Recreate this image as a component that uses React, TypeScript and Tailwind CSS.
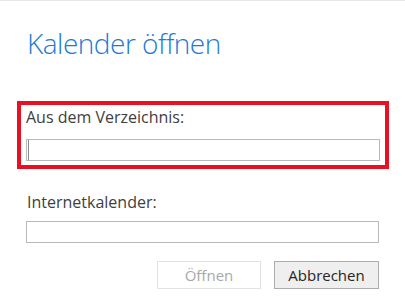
import React from 'react'

function Field({ caret }: { caret?: boolean }) {
  return (
    <div className="flex h-[22px] w-full items-stretch border border-[#b8b8b8] bg-white">
      {caret && <span className="ml-px w-px bg-[#8a8a8a]" />}
      <input readOnly className="min-w-0 flex-1 bg-transparent outline-none" />
    </div>
  )
}

export default function App() {
  return (
    <div className="h-[300px] w-[405px] border-t border-[#e6e6e6] bg-white font-['Open_Sans','Liberation_Sans',sans-serif] text-[#404040]">
      {/* Title */}
      <h1 className="ml-[27px] mt-[22px] text-[28px] font-light leading-[40px] tracking-[-0.5px] text-[#1e7bd4]">
        Kalender öffnen
      </h1>

      {/* Highlighted section */}
      <div className="ml-[17px] mt-[38px] h-[68px] w-[372px] border-4 border-[#e81123] px-[5px] pt-[2px]">
        <label className="block text-[16px] leading-[20px]">Aus dem Verzeichnis:</label>
        <div className="mt-[12px]">
          <Field caret />
        </div>
      </div>

      {/* Internet calendar */}
      <div className="px-[26px]">
        <label className="mt-[23px] block pl-px text-[16px] leading-[20px]">Internetkalender:</label>
        <div className="mt-[9px]">
          <Field />
        </div>

        {/* Buttons */}
        <div className="mt-[18px] flex justify-end gap-[13px]">
          <button disabled className="h-[28px] w-[104px] border border-[#e2e2e2] bg-white text-[15px] text-[#a8a8a8]">
            Öffnen
          </button>
          <button className="h-[28px] w-[105px] border border-[#acacac] bg-[#efefef] text-[15px] text-[#262626]">
            Abbrechen
          </button>
        </div>
      </div>
    </div>
  )
}
